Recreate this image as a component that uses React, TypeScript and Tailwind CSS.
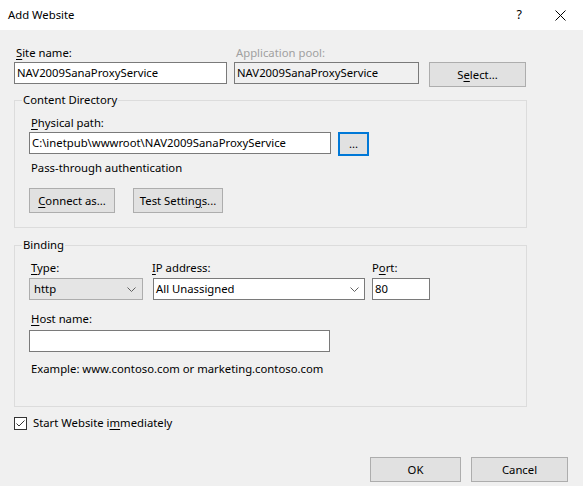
import React from 'react'

const font = { fontFamily: '"Noto Sans", "Open Sans", sans-serif' }

function U({ children }: { children: React.ReactNode }) {
  return <span className="underline underline-offset-[2px] decoration-[1px]">{children}</span>
}

function Button({ children, className = '' }: { children: React.ReactNode; className?: string }) {
  return (
    <div className={`h-[25px] flex items-center justify-center bg-[#e1e1e1] border border-[#adadad] text-black ${className}`}>
      {children}
    </div>
  )
}

function Chevron() {
  return (
    <svg width="9" height="5" viewBox="0 0 9 5" className="shrink-0">
      <path d="M0.5 0.5 L4.5 4.5 L8.5 0.5" fill="none" stroke="#606060" strokeWidth="1" />
    </svg>
  )
}

function Group({ title, children, className = '' }: { title: string; children: React.ReactNode; className?: string }) {
  return (
    <fieldset className={`w-[513px] border border-[#dcdcdc] ${className}`}>
      <legend className="ml-[7px] px-[1px] h-[16px] leading-[16px]">{title}</legend>
      {children}
    </fieldset>
  )
}

export default function App() {
  return (
    <div className="w-[583px] h-[486px] bg-[#f0f0f0] text-[11.3px] leading-[16px] text-black overflow-hidden" style={font}>
      {/* title bar */}
      <div className="h-[30px] bg-white flex items-center">
        <span className="ml-[8px]">Add Website</span>
        <span className="ml-auto mr-[33px] text-[12.5px]">?</span>
        <svg width="11" height="11" viewBox="0 0 11 11" className="mr-[17px]">
          <path d="M0.5 0.5 L10.5 10.5 M10.5 0.5 L0.5 10.5" stroke="#000" strokeWidth="1" />
        </svg>
      </div>

      <div className="pl-[14px]">
        {/* site name row */}
        <div className="flex mt-[15px]">
          <div className="w-[213px]">
            <div className="pl-[2px] h-[16px]"><U>S</U>ite name:</div>
            <div className="mt-[1px] h-[22px] bg-white border border-[#7a7a7a] flex items-center px-[2px]">NAV2009SanaProxyService</div>
          </div>
          <div className="ml-[7px] w-[185px]">
            <div className="pl-[2px] h-[16px] text-[#a0a0a0]">Application pool:</div>
            <div className="mt-[1px] h-[22px] border border-[#7a7a7a] flex items-center px-[2px]">NAV2009SanaProxyService</div>
          </div>
          <Button className="ml-[10px] mt-[17px] w-[97px]">S<U>e</U>lect...</Button>
        </div>

        {/* content directory */}
        <Group title="Content Directory" className="mt-[5px] pb-[14px]">
          <div className="mt-[7px] ml-[16px] h-[16px]"><U>P</U>hysical path:</div>
          <div className="mt-[1px] ml-[14px] flex items-start">
            <div className="w-[302px] h-[22px] bg-white border border-[#7a7a7a] flex items-center px-[2px]">C:\inetpub\wwwroot\NAV2009SanaProxyService</div>
            <div className="ml-[7px] w-[31px] h-[24px] bg-[#e1e1e1] border-2 border-[#0078d7] flex items-center justify-center">...</div>
          </div>
          <div className="mt-[4px] ml-[16px] h-[16px]">Pass-through authentication</div>
          <div className="mt-[12px] ml-[14px] flex">
            <Button className="w-[86px]"><U>C</U>onnect as...</Button>
            <Button className="ml-[18px] w-[90px]">Test Settin<U>g</U>s...</Button>
          </div>
        </Group>

        {/* binding */}
        <Group title="Binding" className="mt-[9px] pb-[29px]">
          <div className="mt-[7px] ml-[14px] flex">
            <div className="w-[114px]">
              <div className="pl-[2px] h-[16px]"><U>T</U>ype:</div>
              <div className="mt-[2px] h-[22px] bg-[#e5e5e5] border border-[#adadad] flex items-center pl-[4px] pr-[6px]">
                <span className="flex-1">http</span>
                <Chevron />
              </div>
            </div>
            <div className="ml-[10px] w-[212px]">
              <div className="h-[16px] -ml-[1px]"><U>I</U>P address:</div>
              <div className="mt-[2px] h-[22px] bg-white border border-[#7a7a7a] flex items-center pl-[2px] pr-[5px]">
                <span className="flex-1">All Unassigned</span>
                <Chevron />
              </div>
            </div>
            <div className="ml-[7px] w-[58px]">
              <div className="h-[16px]">P<U>o</U>rt:</div>
              <div className="mt-[2px] h-[22px] bg-white border border-[#7a7a7a] flex items-center px-[2px]">80</div>
            </div>
          </div>
          <div className="mt-[11px] ml-[16px] h-[16px]"><U>H</U>ost name:</div>
          <div className="mt-[3px] ml-[14px] w-[301px] h-[22px] bg-white border border-[#7a7a7a]" />
          <div className="mt-[9px] ml-[16px] h-[16px]">Example: www.contoso.com or marketing.contoso.com</div>
        </Group>

        {/* start immediately */}
        <div className="mt-[8px] flex items-center h-[16px]">
          <div className="w-[13px] h-[13px] bg-white border border-[#333333] flex items-center justify-center">
            <svg width="11" height="11" viewBox="0 0 11 11">
              <path d="M1.5 5.5 L4 8 L9.5 2.5" fill="none" stroke="#333" strokeWidth="1" />
            </svg>
          </div>
          <span className="ml-[6px]">Start Website i<U>m</U>mediately</span>
        </div>
      </div>

      {/* dialog buttons */}
      <div className="mt-[26px] flex justify-end pr-[15px]">
        <Button className="w-[91px]">OK</Button>
        <Button className="ml-[10px] w-[97px]">Cancel</Button>
      </div>
    </div>
  )
}
